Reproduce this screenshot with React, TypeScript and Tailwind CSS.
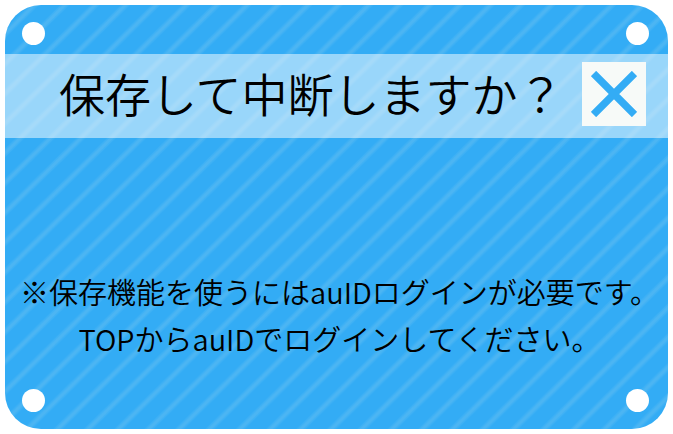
import React from "react";

const holes = "size-[23px] rounded-full bg-white";

const stripeLines = "M-15.2 14.9 L15.2 -14.9 M-15.2 44.7 L45.6 -14.9 M15.2 44.7 L45.6 14.9";

function Stripes() {
  return (
    <svg className="absolute inset-0 size-full" aria-hidden="true">
      <defs>
        <pattern id="stripes" width="30.4" height="29.8" patternUnits="userSpaceOnUse" patternTransform="translate(0 148)">
          <path d={stripeLines} stroke="#f4f4ea" strokeOpacity="0.06" strokeWidth="6" />
          <path d={stripeLines} stroke="#f4f4ea" strokeOpacity="0.07" strokeWidth="3" />
        </pattern>
      </defs>
      <rect width="100%" height="100%" fill="url(#stripes)" />
    </svg>
  );
}

export default function App() {
  return (
    <main className="bg-white p-[5px] font-['Noto_Sans_CJK_JP',sans-serif] font-[350] text-black">
      <section
        role="dialog"
        aria-labelledby="dialog-title"
        className="relative overflow-hidden rounded-[36px] bg-[#33acf5]"
      >
        <Stripes />
        <div className="relative flex flex-col">
          <div className="flex h-[49px] items-center justify-between pt-[7px] pr-[19px] pl-[17px]">
            <span className={holes} />
            <span className={holes} />
          </div>
          <header className="flex h-[84px] items-start justify-between bg-white/50 pt-2 pr-[22px] pl-[54px]">
            <h1 id="dialog-title" className="text-[46px] leading-[60px] font-[350] whitespace-nowrap">
              保存して中断しますか？
            </h1>
            <button type="button" aria-label="閉じる" className="grid size-16 shrink-0 place-items-center bg-[#f7faf8]">
              <svg viewBox="0 0 46 46" className="size-[46px]" aria-hidden="true">
                <path d="M2.5 2.5 L43.5 43.5 M43.5 2.5 L2.5 43.5" stroke="#33acf5" strokeWidth="7.5" />
              </svg>
            </button>
          </header>
          <p className="pt-[130px] pl-[6px] text-center text-[29px] leading-[47px] whitespace-nowrap">
            ※保存機能を使うにはauIDログインが必要です。
            <br />
            TOPからauIDでログインしてください。
          </p>
          <div className="flex h-[67px] items-end justify-between pr-[19px] pb-[17px] pl-[17px]">
            <span className={holes} />
            <span className={holes} />
          </div>
        </div>
      </section>
    </main>
  );
}
